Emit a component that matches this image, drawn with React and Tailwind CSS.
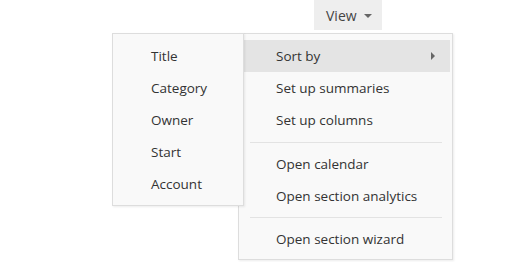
import React from 'react';

const mainItems = [
  ['Sort by', 'Set up summaries', 'Set up columns'],
  ['Open calendar', 'Open section analytics'],
  ['Open section wizard'],
];

const sortFields = ['Title', 'Category', 'Owner', 'Start', 'Account'];

const font = { fontFamily: '"Open Sans", "Noto Sans", sans-serif' };

const App = () => {
  return (
    <div className="relative w-[514px] h-[262px] bg-white overflow-hidden text-[#333]" style={font}>
      <div className="flex pl-[314px]">
        <div className="relative">
          {/* View button */}
          <button className="flex items-center gap-[7px] h-[30px] w-[68px] pl-[12px] bg-[#eeeeee] text-[14px] text-[#444]">
            <span>View</span>
            <svg width="8" height="4" viewBox="0 0 8 4" className="mt-[1px]">
              <path d="M0 0h8L4 4z" fill="#666" />
            </svg>
          </button>

          {/* Main menu */}
          <div className="absolute top-[33px] left-[-76px] w-[215px] bg-[#f9f9f9] border border-[#dddddd] shadow-[1px_1px_2px_rgba(0,0,0,0.08)] pt-[6px] pb-[4px] pl-[3px] pr-[2px] text-[13.5px]">
            {mainItems.map((group, gi) => (
              <div key={gi}>
                {gi === 1 && <div className="h-px bg-[#e3e3e3] mx-[8px] mt-[6px] mb-[5px]" />}
                {gi === 2 && <div className="h-px bg-[#e3e3e3] mx-[8px] my-[5px]" />}
                {group.map((label) => (
                  <div
                    key={label}
                    className={`flex items-center justify-between h-[32px] pl-[34px] pr-[15px] ${label === 'Sort by' ? 'bg-[#e4e4e4]' : ''}`}
                  >
                    <span>{label}</span>
                    {label === 'Sort by' && (
                      <svg width="4" height="8" viewBox="0 0 4 8">
                        <path d="M0 0v8l4-4z" fill="#666" />
                      </svg>
                    )}
                  </div>
                ))}
              </div>
            ))}

            {/* Sort by submenu */}
            <div className="absolute top-[-1px] left-[-127px] w-[132px] bg-[#f9f9f9] border border-[#dddddd] shadow-[1px_1px_2px_rgba(0,0,0,0.08)] pt-[6px] pb-[5px]">
              {sortFields.map((f) => (
                <div key={f} className="flex items-center h-[32px] pl-[38px]">
                  {f}
                </div>
              ))}
            </div>
          </div>
        </div>
      </div>
    </div>
  );
};

export default App;
